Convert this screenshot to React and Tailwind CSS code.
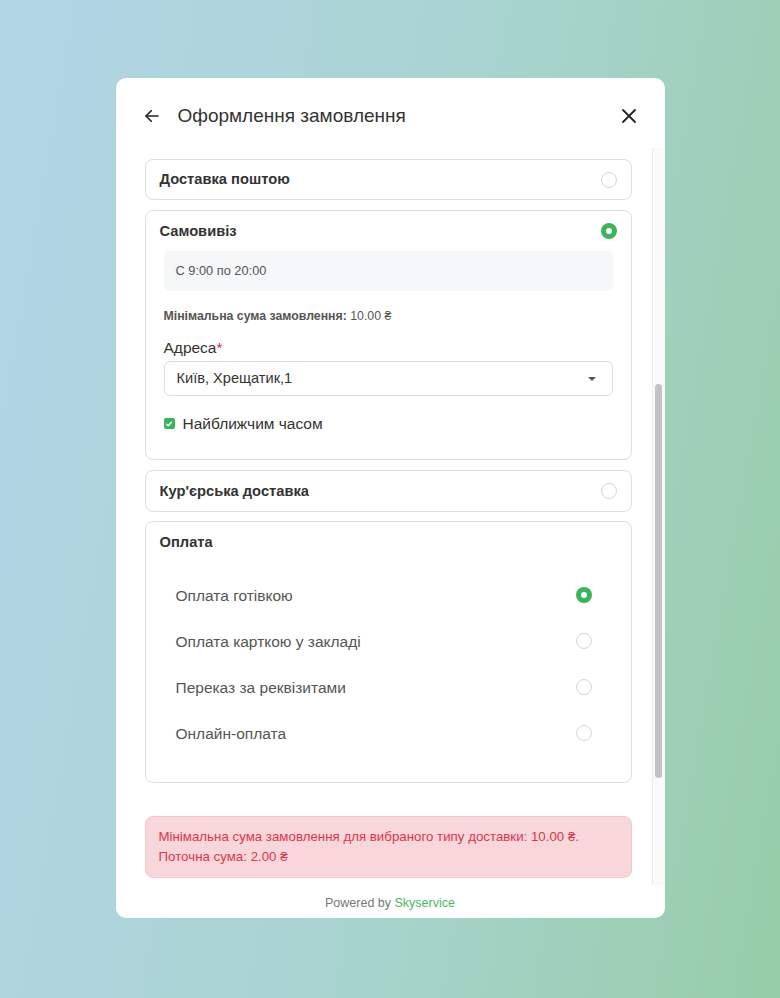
import React from "react";

const font = { fontFamily: '"Liberation Sans", "DejaVu Sans", Arial, sans-serif' };

function Radio({ checked }) {
  if (checked) {
    return (
      <span className="flex h-4 w-4 items-center justify-center rounded-full bg-[#3bb55a]">
        <span className="h-[6px] w-[6px] rounded-full bg-white" />
      </span>
    );
  }
  return <span className="h-4 w-4 rounded-full border border-[#d6d6d6] bg-white" />;
}

function CardHeader({ title, checked, h = "h-10" }) {
  return (
    <div className={`flex ${h} items-center justify-between px-[14px]`}>
      <span className="text-[14.7px] font-bold text-[#333]">{title}</span>
      {checked !== undefined && <Radio checked={checked} />}
    </div>
  );
}

export default function App() {
  const payments = [
    ["Оплата готівкою", true],
    ["Оплата карткою у закладі", false],
    ["Переказ за реквізитами", false],
    ["Онлайн-оплата", false],
  ];
  return (
    <div
      className="flex h-[998px] w-[780px] items-start justify-center bg-[linear-gradient(100deg,#b2d5e6_0%,#a9d4d2_50%,#97cda8_100%)] pt-[78px]"
      style={font}
    >
      <div className="flex h-[840px] w-[549px] flex-col rounded-[10px] bg-white">
        {/* header */}
        <div className="flex h-[70px] shrink-0 items-center justify-between pl-[27px] pr-[27px] pt-[6px]">
          <div className="flex items-center gap-[17px]">
            <svg width="18" height="18" viewBox="0 0 24 24" fill="none" stroke="#222" strokeWidth="2.2" strokeLinecap="round" strokeLinejoin="round">
              <path d="M20 12H4" />
              <path d="M11 5l-7 7 7 7" />
            </svg>
            <span className="text-[19px] text-[#333]">Оформлення замовлення</span>
          </div>
          <svg width="18" height="18" viewBox="0 0 24 24" fill="none" stroke="#222" strokeWidth="2.4" strokeLinecap="round">
            <path d="M4 4l16 16M20 4L4 20" />
          </svg>
        </div>

        {/* scroll area */}
        <div className="flex min-h-0 flex-1">
          <div className="flex flex-1 flex-col pl-[29px] pr-[20px] pt-[11px]">
            <div className="rounded-[8px] border border-[#dedede]">
              <CardHeader title="Доставка поштою" checked={false} h="h-[39px]" />
            </div>

            <div className="mt-[10px] rounded-[8px] border border-[#dedede] pb-[24px]">
              <CardHeader title="Самовивіз" checked={true} />
              <div className="px-[18px]">
                <div className="flex h-10 items-center rounded-[6px] bg-[#f6f7f9] px-3 text-[12.8px] text-[#555]">
                  С 9:00 по 20:00
                </div>
                <div className="mt-[17px] text-[12.3px] leading-[16px] text-[#555]">
                  <span className="font-bold">Мінімальна сума замовлення:</span> 10.00 ₴
                </div>
                <div className="mt-[14px] text-[15.5px] leading-[20px] text-[#333]">
                  Адреса<span className="text-[#e5173f]">*</span>
                </div>
                <div className="mt-[3px] flex h-[35px] items-center justify-between rounded-[6px] border border-[#dcdcdc] pl-3 pr-[16px] text-[14.6px] text-[#333]">
                  <span>Київ, Хрещатик,1</span>
                  <span className="h-0 w-0 border-x-[4px] border-t-[4px] border-x-transparent border-t-[#555]" />
                </div>
                <div className="mt-[16px] flex items-center gap-[8px] text-[15.5px] text-[#333]">
                  <span className="flex h-[11px] w-[11px] items-center justify-center rounded-[2px] bg-[#3bb55a]">
                    <svg width="8" height="8" viewBox="0 0 10 10" fill="none" stroke="#fff" strokeWidth="1.8" strokeLinecap="round" strokeLinejoin="round">
                      <path d="M2 5.2l2 2 4-4.4" />
                    </svg>
                  </span>
                  <span>Найближчим часом</span>
                </div>
              </div>
            </div>

            <div className="mt-[10px] rounded-[8px] border border-[#dedede]">
              <CardHeader title="Кур'єрська доставка" checked={false} />
            </div>

            <div className="mt-[9px] rounded-[8px] border border-[#dedede] pb-[26px]">
              <CardHeader title="Оплата" />
              <div className="mt-[10px] flex flex-col pl-[30px] pr-[39px]">
                {payments.map(([label, checked]) => (
                  <div key={label} className="flex h-[46px] items-center justify-between text-[15.5px] text-[#555]">
                    <span>{label}</span>
                    <Radio checked={checked} />
                  </div>
                ))}
              </div>
            </div>

            <div className="mt-[33px] rounded-[8px] border border-[#f5c6cc] bg-[#f8d7db] px-[13px] py-[10px] text-[13.3px] leading-[20px] text-[#e2344e]">
              Мінімальна сума замовлення для вибраного типу доставки: 10.00 ₴.
              <br />
              Поточна сума: 2.00 ₴
            </div>
          </div>

          {/* scrollbar */}
          <div className="mr-px flex w-[12px] flex-col border-l border-[#ececec] bg-[#fafafa] pt-[236px] pb-[107px]">
            <div className="mx-auto w-[7px] flex-1 rounded-full bg-[#c2c2c2]" />
          </div>
        </div>

        {/* footer */}
        <div className="flex h-[33px] shrink-0 items-center justify-center pt-[3px] text-[12.5px] text-[#777]">
          Powered by&nbsp;<span className="text-[#4cb860]">Skyservice</span>
        </div>
      </div>
    </div>
  );
}
